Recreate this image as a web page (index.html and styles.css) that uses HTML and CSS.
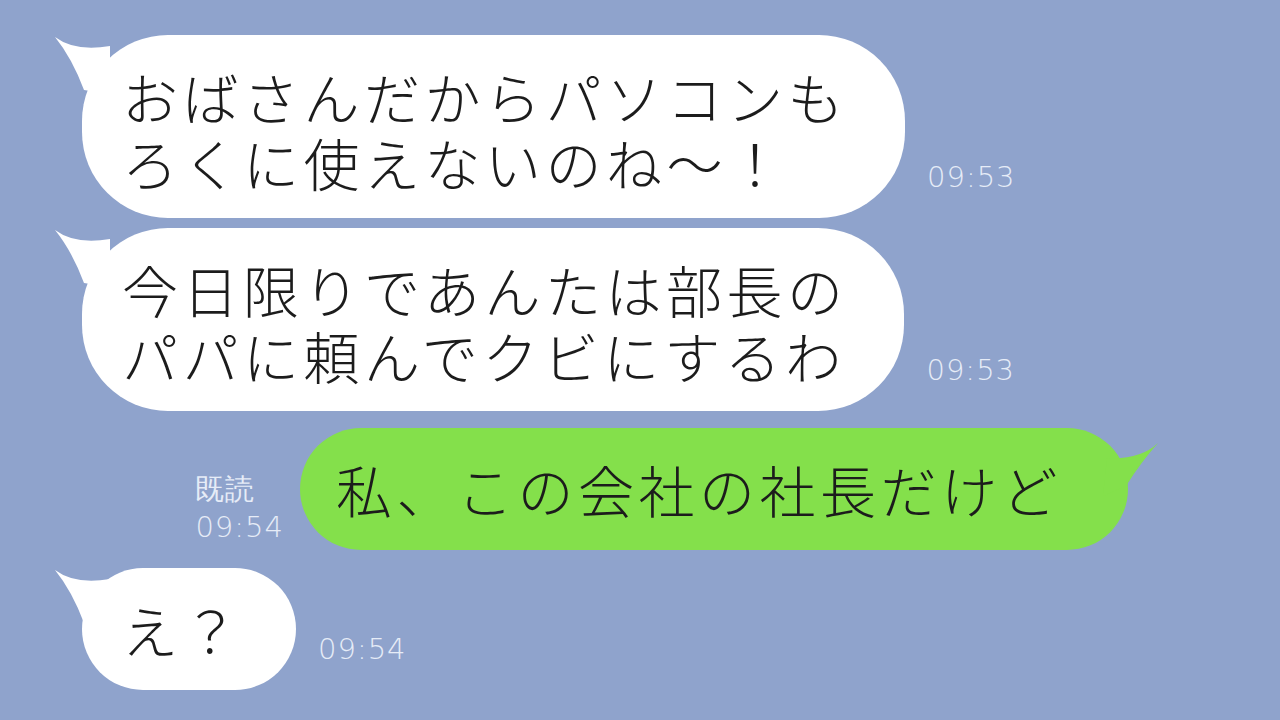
FILE: index.html
```html
<!DOCTYPE html>
<html lang="ja">

<head>
  <meta charset="UTF-8" />
  <title>Chat</title>
  <link rel="stylesheet" href="styles.css">
</head>

<body>
  <div class="chat">
    <div class="row row-in">
      <div class="bubble bubble-in">
        <svg class="tail tail-in" width="70" height="70" viewBox="0 0 70 70">
          <path d="M5 7 Q25 22 60 16 L60 64 L34 60 Q22 28 5 7 Z" fill="#ffffff" />
        </svg>
        おばさんだからパソコンも<br>ろくに使えないのね～！
      </div>
      <div class="meta">09:53</div>
    </div>

    <div class="row row-in">
      <div class="bubble bubble-in">
        <svg class="tail tail-in" width="70" height="70" viewBox="0 0 70 70">
          <path d="M5 7 Q25 22 60 16 L60 64 L34 60 Q22 28 5 7 Z" fill="#ffffff" />
        </svg>
        今日限りであんたは部長の<br>パパに頼んでクビにするわ
      </div>
      <div class="meta">09:53</div>
    </div>

    <div class="row row-out">
      <div class="meta meta-out">既読<br>09:54</div>
      <div class="bubble bubble-out">
        <svg class="tail tail-out" width="70" height="70" viewBox="0 0 70 70">
          <path d="M65 7 Q47 24 14 22 L10 60 L33 50 Q48 26 65 7 Z" fill="#84e04b" />
        </svg>
        私、この会社の社長だけど
      </div>
    </div>

    <div class="row row-in">
      <div class="bubble bubble-in short">
        <svg class="tail tail-in" width="70" height="70" viewBox="0 0 70 70">
          <path d="M5 7 Q25 22 60 16 L60 64 L34 60 Q22 28 5 7 Z" fill="#ffffff" />
        </svg>
        え？
      </div>
      <div class="meta">09:54</div>
    </div>
  </div>
</body>

</html>
```

FILE: styles.css
```css
/* Global Styles */
* {
  box-sizing: border-box;
  margin: 0;
  padding: 0;
}

html,
body {
  width: 1280px;
  height: 720px;
  overflow: hidden;
}

body {
  background: #8fa3cc;
  font-family: "Noto Sans CJK JP", "Noto Sans", sans-serif;
  color: #1c1c1c;
}

.chat {
  display: flex;
  flex-direction: column;
  padding: 35px 152px 0 82px;
}

/* Rows */
.row {
  display: flex;
  align-items: flex-end;
  margin-bottom: 10px;
}

.row-out {
  justify-content: flex-end;
  margin-top: 7px;
  margin-bottom: 18px;
}

/* Bubbles */
.bubble {
  position: relative;
  font-size: 56px;
  font-weight: 300;
  line-height: 66px;
  letter-spacing: 4.5px;
  white-space: nowrap;
}

.bubble-in {
  background: #ffffff;
  border-radius: 86px;
  padding: 28px 57px 23px 40px;
}

.bubble-in.short {
  border-radius: 62px;
  padding: 28px 53px 28px 40px;
}

.bubble-out {
  background: #84e04b;
  border-radius: 62px;
  padding: 28px 66px 28px 36px;
}

.tail {
  position: absolute;
}

.tail-in {
  left: -32px;
  top: -5px;
}

.tail-out {
  right: -35px;
  top: 8px;
}

/* Time / read marks */
.meta {
  color: #e6ecf7;
  font-family: "DejaVu Sans", sans-serif;
  font-weight: 200;
  font-size: 29px;
  line-height: 38px;
  letter-spacing: 1px;
  margin-left: 22px;
  margin-bottom: 22px;
}

.meta-out {
  margin-left: 0;
  margin-right: 16px;
  margin-bottom: 4px;
}
```
